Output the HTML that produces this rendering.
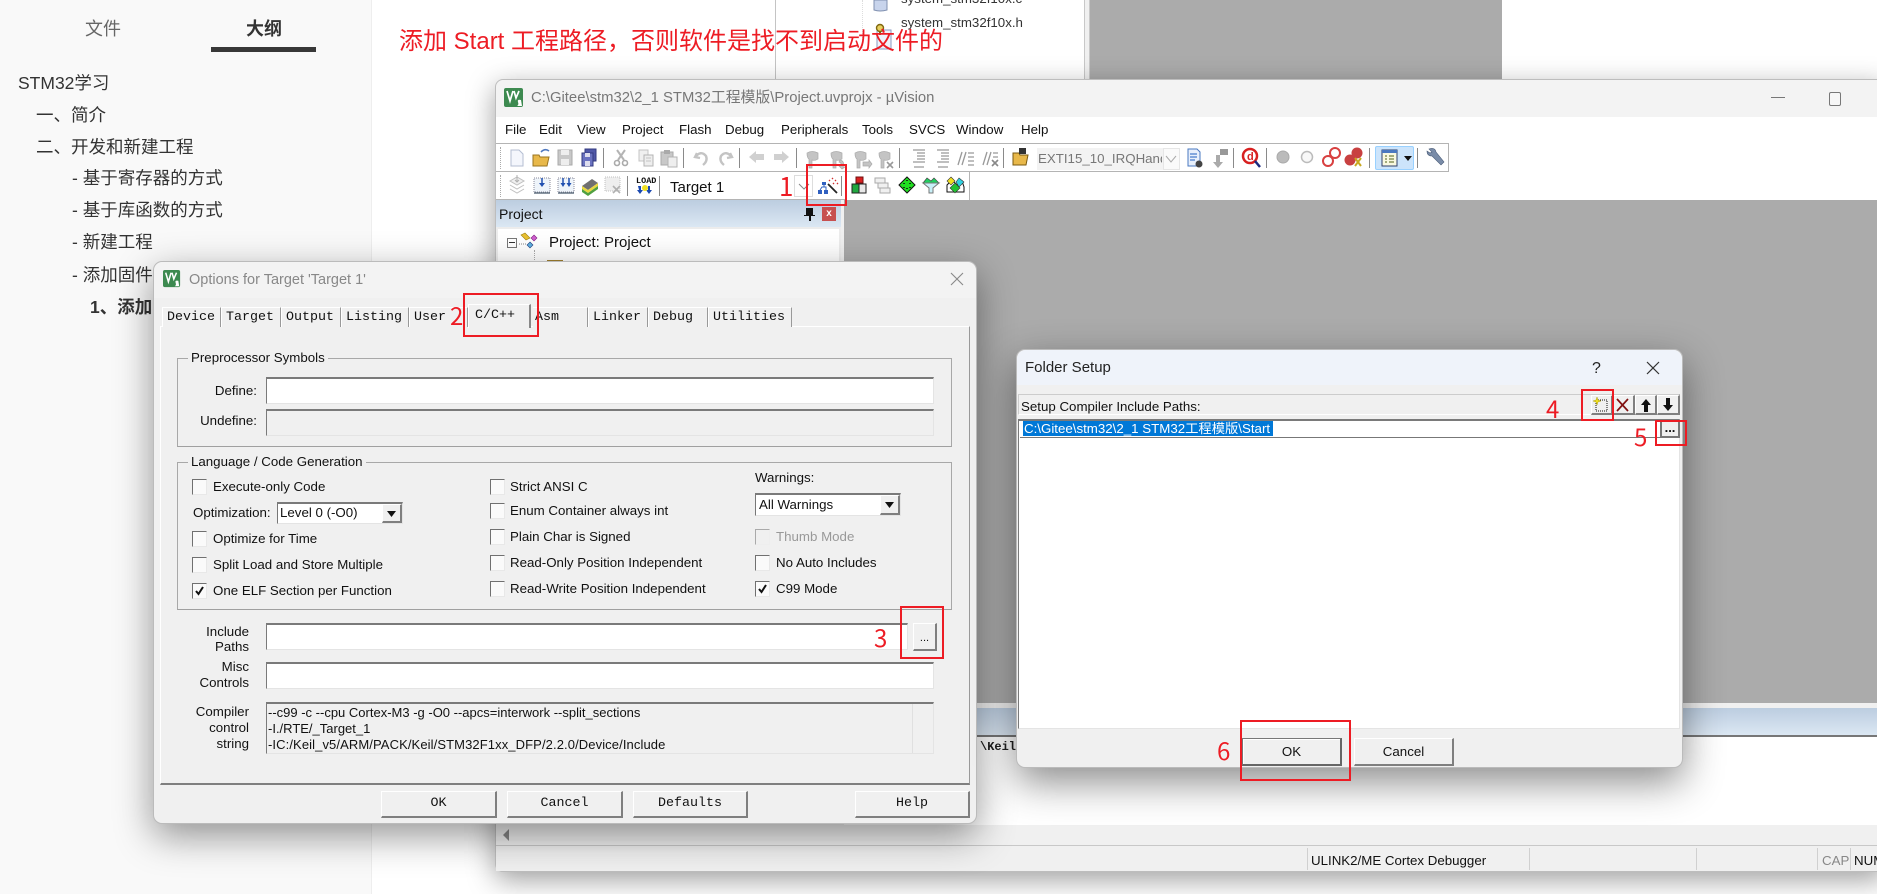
<!DOCTYPE html>
<html lang="zh"><head><meta charset="utf-8"><title>Keil</title>
<style>
html,body{margin:0;padding:0;width:1877px;height:894px;overflow:hidden;background:#fff}
body{position:relative;font-family:"Liberation Sans","Noto Sans CJK SC",sans-serif;color:#111}
div,span,svg{position:absolute;box-sizing:border-box}
.t{white-space:nowrap;line-height:20px;height:20px;font-size:13.3px}
.o{font-size:17.5px;color:#333;line-height:24px;height:24px;white-space:nowrap}
.m{font-size:13.3px;color:#111;top:120px;white-space:nowrap;line-height:20px}
.r{position:absolute;border:2px solid #ed1c24;z-index:50}
.n{color:#ed1c24;font-size:24px;line-height:30px;height:30px;z-index:50;font-family:"Noto Sans CJK SC","Liberation Sans",sans-serif}
.tab{top:307px;height:20px;background:#f0f0f0;border-top:1px solid #fff;border-left:1px solid #fff;border-right:1px solid #999;font:13.33px/19px "Liberation Mono",monospace;padding-left:4px;white-space:nowrap;color:#111}
.in{background:#fff;border-top:2px solid #7a7a7a;border-left:1px solid #7a7a7a;border-right:1px solid #e4e4e4;border-bottom:1px solid #e4e4e4}
.g{border:1px solid #a8a8a8;border-bottom:1px solid #a0a0a0}
.gl{background:#f0f0f0;padding:0 3px;font-size:13.3px;line-height:18px;height:18px;white-space:nowrap;color:#111}
.c{width:15px;height:16px;background:#fafafa;border-top:1px solid #707070;border-left:1px solid #707070;border-right:1px solid #e8e8e8;border-bottom:1px solid #e8e8e8}
.b{background:#f0f0f0;border-top:1px solid #fff;border-left:1px solid #fff;border-right:2px solid #7f7f7f;border-bottom:2px solid #7f7f7f;text-align:center;font:13.33px/24px "Liberation Mono",monospace;color:#111}
.b2{background:#f0f0f0;border-top:1px solid #fff;border-left:1px solid #fff;border-right:2px solid #7f7f7f;border-bottom:2px solid #7f7f7f;text-align:center;font-size:13.3px;line-height:25px;color:#111}
.sep{width:1px;background:#8a8a8a}
</style></head><body>

<!-- sidebar -->
<div style="left:0;top:0;width:372px;height:894px;background:#f9f9f9;border-right:1px solid #eee"></div>
<div class="t" style="left:85px;top:18px;width:36px;font-size:18px;line-height:22px;height:22px;color:#666">文件</div>
<div class="t" style="left:246px;top:18px;width:36px;font-size:18px;line-height:22px;height:22px;color:#333;font-weight:700">大纲</div>
<div style="left:211px;top:47px;width:105px;height:5px;background:#383838"></div>
<div class="o" style="left:18px;top:71px">STM32学习</div>
<div class="o" style="left:36px;top:103px">一、简介</div>
<div class="o" style="left:36px;top:135px">二、开发和新建工程</div>
<div class="o" style="left:72px;top:166px">- 基于寄存器的方式</div>
<div class="o" style="left:72px;top:198px">- 基于库函数的方式</div>
<div class="o" style="left:72px;top:230px">- 新建工程</div>
<div class="o" style="left:72px;top:263px">- 添加固件库</div>
<div class="o" style="left:90px;top:295px;font-weight:700">1、添加固件</div>

<!-- top doc -->
<div style="left:775px;top:0;width:1px;height:80px;background:#c4c4c4"></div>
<div style="left:1084px;top:0;width:6px;height:80px;background:#f0f0f0;border-left:1px solid #c8c8c8;border-right:1px solid #c8c8c8"></div>
<div style="left:1090px;top:0;width:412px;height:80px;background:#ababab"></div>
<div style="left:862px;top:0;width:1px;height:50px;border-left:1px dotted #ddd"></div>
<div style="left:862px;top:50px;width:14px;height:1px;border-top:1px dotted #ddd"></div>
<svg style="left:872px;top:0" width="26" height="52" viewBox="0 0 26 52">
<path d="M2 0h13v10q-7 2-13 0z" fill="#c8d4ec" stroke="#8090b0"/>
<path d="M5 30h14v19h-14z" fill="#eef2fb" stroke="#8a9ac0"/><circle cx="8" cy="28" r="3.500" fill="#e8d060" stroke="#806810" stroke-width="1.400"/><rect x="7" y="31" width="2" height="4" fill="#806810"/>
</svg>
<div class="t" style="left:901px;top:-11px;font-size:13.3px;color:#333">system_stm32f10x.c</div>
<div class="t" style="left:901px;top:13px;font-size:13.3px;color:#333">system_stm32f10x.h</div>
<div class="t" style="left:399px;top:25px;height:34px;line-height:34px;font-size:24px;color:#ed1c24">添加 Start 工程路径，否则软件是找不到启动文件的</div>

<!-- Keil window -->
<div style="left:495px;top:79px;width:1390px;height:793px;border-radius:8px 0 0 8px;background:#f0f0f0;border:1px solid #bdbdbd;box-shadow:0 8px 28px rgba(0,0,0,.38)"></div>
<div style="left:496px;top:80px;width:1381px;height:37px;background:#f3f3f3;border-radius:8px 0 0 0"></div>
<div class="t" style="left:531px;top:88px;font-size:14.85px;color:#777">C:\Gitee\stm32\2_1 STM32工程模版\Project.uvprojx - µVision</div>
<svg style="left:504px;top:88px" width="20" height="20" viewBox="0 0 20 20"><rect width="19" height="19" rx="2" fill="#3d8a50"/><path d="M3 3l3 10 3-10M10 3l2 7 3-7" stroke="#fff" stroke-width="1.700" fill="none"/><path d="M17 12q-4-1-3 2t-1 4h5z" fill="#fff"/></svg>
<div style="left:1771px;top:97px;width:14px;height:1px;background:#777"></div>
<div style="left:1829px;top:92px;width:12px;height:14px;border:1px solid #777;border-radius:2px;background:#f6f6f6"></div>
<div style="left:496px;top:117px;width:1381px;height:26px;background:#fff"></div>
<div class="m" style="left:505px">File</div><div class="m" style="left:539px">Edit</div><div class="m" style="left:577px">View</div><div class="m" style="left:622px">Project</div><div class="m" style="left:679px">Flash</div><div class="m" style="left:725px">Debug</div><div class="m" style="left:781px">Peripherals</div><div class="m" style="left:862px">Tools</div><div class="m" style="left:909px">SVCS</div><div class="m" style="left:956px">Window</div><div class="m" style="left:1021px">Help</div>
<!-- toolbars -->
<div style="left:496px;top:143px;width:1381px;height:57px;background:#fff"></div>
<div style="left:496px;top:143px;width:952px;height:1px;background:#b4b4b4"></div>
<div style="left:496px;top:171px;width:952px;height:1px;background:#b4b4b4"></div>
<div style="left:1448px;top:143px;width:1px;height:29px;background:#b4b4b4"></div>
<div style="left:969px;top:172px;width:1px;height:28px;background:#b4b4b4"></div>
<div style="left:500px;top:147px;width:1px;height:22px;border-left:1px dotted #aaa"></div>
<div style="left:500px;top:175px;width:1px;height:22px;border-left:1px dotted #aaa"></div>
<div class="sep" style="left:603px;top:148px;height:20px"></div><div class="sep" style="left:683px;top:148px;height:20px"></div><div class="sep" style="left:739px;top:148px;height:20px"></div><div class="sep" style="left:796px;top:148px;height:20px"></div><div class="sep" style="left:899px;top:148px;height:20px"></div><div class="sep" style="left:1003px;top:148px;height:20px"></div><div class="sep" style="left:1233px;top:148px;height:20px"></div><div class="sep" style="left:1266px;top:148px;height:20px"></div><div class="sep" style="left:1369px;top:148px;height:20px"></div><div class="sep" style="left:1417px;top:148px;height:20px"></div>
<div class="sep" style="left:627px;top:176px;height:20px"></div><div class="sep" style="left:659px;top:176px;height:20px"></div><div class="sep" style="left:841px;top:176px;height:20px"></div>
<div style="left:1037px;top:148px;width:143px;height:22px;background:#f3f3f3"></div>
<div style="left:1163px;top:148px;width:17px;height:22px;background:#fafafa;border:1px solid #e6e6e6"></div>
<div class="t" style="left:1038px;top:149px;width:124px;overflow:hidden;font-size:13.3px;color:#777">EXTI15_10_IRQHandler</div>
<svg style="left:1165px;top:154px" width="12" height="10"><path d="M1 2l5 6 5-6" fill="none" stroke="#aaa"/></svg>
<div style="left:1375px;top:146px;width:39px;height:24px;background:#cce4fb;border:1px solid #99d1ff;border-radius:2px"></div>
<div class="t" style="left:670px;top:178px;font-size:15px;color:#111">Target 1</div>
<div style="left:794px;top:175px;width:19px;height:22px;border:1px solid #ddd;background:#fff"></div>
<svg style="left:798px;top:182px" width="12" height="10"><path d="M1 2l5 5 5-5" fill="none" stroke="#888"/></svg>

<svg style="left:0;top:0" width="1877" height="894" viewBox="0 0 1877 894">
<!-- row 1 -->
<path d="M511 150h8l4 4v12h-12z" fill="#f4f6fc" stroke="#b4bed2"/>
<path d="M533 155h6l1 2h9l-2 9h-14z" fill="#e8b84a" stroke="#9a7420"/><path d="M541 152q4-4 8-1" fill="none" stroke="#4f78c0" stroke-width="1.600"/>
<g><rect x="558" y="150" width="14" height="15" fill="#c8c8c8" stroke="#aaa"/><rect x="561" y="150" width="8" height="5" fill="#eee"/><rect x="561" y="159" width="8" height="6" fill="#eee"/></g>
<g><rect x="585" y="149" width="11" height="12" fill="#5058a8" stroke="#333a80"/><rect x="582" y="153" width="11" height="13" fill="#6a72c0" stroke="#333a80"/><rect x="585" y="153" width="5" height="4" fill="#dde"/><rect x="585" y="161" width="5" height="5" fill="#dde"/></g>
<path d="M617 150l7 10M625 150l-7 10" stroke="#b4b4b4" stroke-width="2"/><circle cx="617" cy="163" r="2.500" fill="none" stroke="#aaa" stroke-width="1.600"/><circle cx="625" cy="163" r="2.500" fill="none" stroke="#aaa" stroke-width="1.600"/>
<path d="M639 150h9v11h-9z" fill="#f0f0f0" stroke="#c4c4c4"/><path d="M644 155h9v11h-9z" fill="#eee" stroke="#b4b4b4"/><path d="M646 158h5M646 161h5" stroke="#c4c4c4"/>
<path d="M661 152h12v13h-12z" fill="#c8c8c8" stroke="#aaa"/><rect x="664" y="150" width="6" height="4" fill="#aaa"/><path d="M668 157h9v10h-9z" fill="#eee" stroke="#b4b4b4"/>
<path d="M697 153l-2 4 5 1M695 157q6-7 11-1q2 5-3 9" fill="none" stroke="#c4c4c4" stroke-width="2.400"/>
<path d="M730 153l2 4-5 1M732 157q-6-7-11-1q-2 5 3 9" fill="none" stroke="#c4c4c4" stroke-width="2.400"/>
<path d="M749 157l7-6v3h8v6h-8v3z" fill="#d0d0d0"/>
<path d="M789 157l-7-6v3h-8v6h8v3z" fill="#d0d0d0"/>
<g fill="#c4c4c4" stroke="#aaa" stroke-width=".7">
<path d="M807 153q5-3 11 0v6q-3 2-6 1v8h-3v-9q-2-1-2-6z"/>
<path d="M831 153q5-3 11 0v6q-3 2-6 1v8h-3v-9q-2-1-2-6z"/><path d="M840 160q5 1 3 7l2 0-3 2-3-3h2q1-3-2-4z"/>
<path d="M855 153q5-3 11 0v6q-3 2-6 1v8h-3v-9q-2-1-2-6z"/><path d="M863 162h6v-2l3 4-3 4v-2h-6z"/>
<path d="M879 153q5-3 11 0v6q-3 2-6 1v8h-3v-9q-2-1-2-6z"/></g><path d="M887 162l6 6M893 162l-6 6" stroke="#999" stroke-width="1.600"/>
<g stroke="#999" stroke-width="1.300" fill="none"><path d="M913 150h12M917 153h8M917 156h8M917 159h8M913 162h12M914 167h10"/><path d="M937 150h12M941 153h8M941 156h8M941 159h8M937 162h12M938 167h10"/><path d="M958 165l4-13M962 165l4-13M968 153h6M968 157h6M968 161h6M968 165h6"/><path d="M983 165l4-13M987 165l4-13M993 153h5M993 157h5"/></g><path d="M992 160l6 6M998 160l-6 6" stroke="#888" stroke-width="1.600"/>
<path d="M1013 153h6l1 2h8l-2 10h-13z" fill="#e8b84a" stroke="#7a5a10"/><rect x="1019" y="148" width="7" height="6" fill="#333"/>
<path d="M1188 149h9l3 3v14h-12z" fill="#e8f0fc" stroke="#4a78c0"/><path d="M1190 154h7M1190 157h7M1190 160h5" stroke="#2060c0"/><circle cx="1199" cy="164" r="3.500" fill="#444"/>
<path d="M1216 155v7h-3l5 6 5-6h-3v-7z" fill="#aaa"/><rect x="1220" y="149" width="8" height="6" fill="#999"/>
<circle cx="1250" cy="156" r="7" fill="#fff" stroke="#d82020" stroke-width="2.500"/><path d="M1255 161l5 6" stroke="#1a2a80" stroke-width="2.500"/><text x="1247" y="160" font-size="11" font-weight="700" fill="#d82020" font-family="Liberation Sans">d</text>
<circle cx="1283" cy="157" r="6" fill="#bbb" stroke="#aaa"/>
<circle cx="1307" cy="157" r="5.500" fill="#f8f8f8" stroke="#bbb" stroke-width="1.500"/>
<circle cx="1335" cy="153" r="5" fill="#fff" stroke="#d84040" stroke-width="2"/><circle cx="1328" cy="161" r="5" fill="#fff" stroke="#d84040" stroke-width="2"/>
<circle cx="1357" cy="153" r="5.500" fill="#c84040"/><circle cx="1350" cy="160" r="5.500" fill="#c84040"/><path d="M1355 158l6 8M1361 158l-6 8" stroke="#c8a820" stroke-width="2"/>
<rect x="1382" y="150" width="15" height="16" fill="#f8f8e0" stroke="#30406a"/><rect x="1382" y="150" width="15" height="3" fill="#4a78c0"/><path d="M1385 156h2M1385 159h2M1385 162h2M1389 156h5M1389 159h5M1389 162h5" stroke="#506018"/>
<path d="M1404 156h8l-4 5z" fill="#111"/>
<path d="M1429 149q6-2 7 3l8 10-3 3-9-9q-5 0-5-5l3 2 2-1z" fill="#7a8ca8" stroke="#4a5c78" stroke-width=".6"/>
<!-- row 2 -->
<g fill="#f0f0f0" stroke="#c0c0c0"><path d="M510 181l7-4 7 4-7 4z"/><path d="M510 185l7 4 7-4M510 189l7 4 7-4" fill="none"/></g><path d="M517 175v7m-2-2l2 2 2-2" stroke="#b0b0b0" fill="none"/>
<g><rect x="534" y="178" width="16" height="14" fill="#eef4fa" stroke="#889" stroke-dasharray="1 1"/><path d="M542 178v6" stroke="#2050b0" stroke-width="1.500"/><path d="M539 183h6l-3 4z" fill="#2050b0"/><path d="M534 193h16" stroke="#567" stroke-width="1.400"/></g>
<g><rect x="558" y="178" width="16" height="14" fill="#eef4fa" stroke="#889" stroke-dasharray="1 1"/><path d="M563 178v6M569 178v6" stroke="#2050b0" stroke-width="1.500"/><path d="M560.500 183h5l-2.500 4zM566.500 183h5l-2.500 4z" fill="#2050b0"/><path d="M558 193h16" stroke="#567" stroke-width="1.400"/></g>
<path d="M582 186l10-7 6 4-10 7z" fill="#707070"/><path d="M582 186l6 4 10-7v3l-10 7-6-4z" fill="#e8d840"/><path d="M582 189l6 4 10-7v3l-10 7-6-4z" fill="#50a040"/>
<rect x="605" y="177" width="15" height="14" fill="#eee" stroke="#c0c0c0" stroke-dasharray="1 1"/><path d="M613 186l7 7M620 186l-7 7" stroke="#b0b0b0" stroke-width="1.600"/>
<text x="636" y="183" font-size="8.500" font-weight="700" font-family="Liberation Mono" fill="#111">LOAD</text><path d="M638 186l1 4h-2l3 4 3-4h-2v-4zM648 186v4h-2l3 4 3-4h-2v-4z" fill="#1a48b0"/><circle cx="645" cy="188" r="3" fill="#f0e020"/>
<!-- wand -->
<g fill="#3060c0"><rect x="822" y="182" width="4" height="3"/><rect x="818" y="190" width="4" height="4"/><rect x="824" y="190" width="4" height="4"/></g><path d="M824 185v2M820 190l2-3h4l0 3" stroke="#3060c0" fill="none"/><path d="M828 184l9 9" stroke="#222" stroke-width="1.800"/><path d="M829 180l1 1M832 178l1 1M835 180l1 1M833 183l1 1M837 183l1 1" stroke="#d03030" stroke-width="1.300"/>
<rect x="856" y="177" width="7" height="6" fill="#d82020" stroke="#701010"/><rect x="852" y="184" width="7" height="9" fill="#20a840" stroke="#222"/><rect x="859" y="184" width="7" height="9" fill="#e8e8e8" stroke="#222"/>
<g fill="#f0f0f0" stroke="#aaa"><rect x="875" y="178" width="10" height="5"/><rect x="878" y="183" width="10" height="5"/><rect x="880" y="188" width="10" height="5"/></g>
<path d="M907 177l8 8-8 8-8-8z" fill="#20e020" stroke="#111"/><path d="M904 183v1M910 183v1M907 180v1M907 188v1M904 187v1M910 187v1" stroke="#111" stroke-width="1.600"/>
<path d="M923 183l4-5 4 3 3-3 5 5z" fill="#20d060" stroke="#444" stroke-width=".7"/><path d="M923 183h16l-6 5v5h-4v-5z" fill="#c8f0f8" stroke="#777"/>
<path d="M947 192v-7l5-5 5 5 5-4 2 6v5z" fill="#fff" stroke="#111"/><path d="M951 177l4 4-4 4-4-4z" fill="#f0e020" stroke="#333" stroke-width=".6"/><path d="M959 178l5 4-5 5-3-5z" fill="#30d0e0" stroke="#333" stroke-width=".6"/><path d="M955 183l5 5-5 5-5-5z" fill="#20c030" stroke="#333" stroke-width=".6"/>
</svg>
<!-- project panel -->
<div style="left:496px;top:199px;width:349px;height:1px;background:#b4b4b4"></div>
<div style="left:496px;top:200px;width:345px;height:27px;background:linear-gradient(#bccde0,#dbe7f3)"></div>
<div class="t" style="left:499px;top:204px;font-size:14px;color:#111">Project</div>
<svg style="left:803px;top:207px" width="13" height="15"><path d="M3 1h7v7h2v1H8v5H6V9H1V8h2z" fill="#111"/></svg>
<div style="left:822px;top:207px;width:14px;height:14px;background:#c75050;color:#fff;font:700 10px/13px 'Liberation Sans';text-align:center">x</div>
<div style="left:844px;top:200px;width:1033px;height:504px;background:#ababab"></div>
<div style="left:841px;top:200px;width:3px;height:504px;background:#f0f0f0"></div>
<div style="left:496px;top:227px;width:345px;height:500px;background:#fff;border:2px solid #ececec"></div>
<div style="left:507px;top:238px;width:10px;height:10px;border:1px solid #777;background:#fff"></div><div style="left:509px;top:242px;width:6px;height:1px;background:#333"></div>
<svg style="left:517px;top:231px" width="30" height="20"><path d="M2 13h8" stroke="#888" stroke-dasharray="1 1"/><path d="M8 2l5 5-4 2-5-5z" fill="#e8c030" stroke="#a08010" stroke-width=".6"/><path d="M17 4l3 3-3 3-3-3z" fill="#d060d0" stroke="#802080" stroke-width=".6"/><path d="M13 11l3 3-3 3-3-3z" fill="#60b0e0" stroke="#204080" stroke-width=".6"/></svg>
<div class="t" style="left:549px;top:233px;font-size:15px;color:#111">Project: Project</div>
<div style="left:534px;top:250px;width:1px;height:14px;border-left:1px dotted #aaa"></div>
<div style="left:547px;top:260px;width:16px;height:6px;background:#e8c878;border:1px solid #a08030"></div>
<!-- bottom panel -->
<div style="left:844px;top:703px;width:1033px;height:5px;background:#f0f0f0"></div>
<div style="left:844px;top:708px;width:1033px;height:27px;background:linear-gradient(#bccde0,#dbe7f3)"></div>
<div style="left:844px;top:735px;width:1033px;height:2px;background:#777"></div>
<div style="left:844px;top:737px;width:1033px;height:88px;background:#fff"></div>
<div class="t" style="left:980px;top:737px;font:12px/20px 'Liberation Mono',monospace;color:#222;font-weight:700">\Keil</div>
<div style="left:496px;top:825px;width:1381px;height:20px;background:#f0f0f0"></div>
<svg style="left:501px;top:828px" width="10" height="14"><path d="M8 1L2 7l6 6z" fill="#888"/></svg>
<div style="left:496px;top:845px;width:1381px;height:1px;background:#c8c8c8"></div>
<div style="left:496px;top:846px;width:1381px;height:25px;background:#f0f0f0"></div>
<div style="left:1307px;top:848px;width:1px;height:22px;background:#d0d0d0"></div><div style="left:1529px;top:848px;width:1px;height:22px;background:#d0d0d0"></div><div style="left:1696px;top:848px;width:1px;height:22px;background:#d0d0d0"></div><div style="left:1817px;top:848px;width:1px;height:22px;background:#d0d0d0"></div><div style="left:1850px;top:848px;width:1px;height:22px;background:#d0d0d0"></div>
<div class="t" style="left:1311px;top:851px;font-size:13.3px">ULINK2/ME Cortex Debugger</div>
<div class="t" style="left:1822px;top:851px;font-size:13.3px;color:#888">CAP</div>
<div class="t" style="left:1854px;top:851px;font-size:13.3px">NUM</div>

<!-- Options dialog -->
<div style="left:153px;top:261px;width:824px;height:563px;background:#f0f0f0;border:1px solid #bbb;border-radius:9px;box-shadow:0 12px 38px rgba(0,0,0,.42)"></div>
<div style="left:154px;top:262px;width:822px;height:36px;background:#f3f3f3;border-radius:9px 9px 0 0"></div>
<svg style="left:163px;top:270px" width="18" height="18" viewBox="0 0 20 20"><rect width="19" height="19" rx="2" fill="#3d8a50"/><path d="M3 3l3 10 3-10M10 3l2 7 3-7" stroke="#fff" stroke-width="1.700" fill="none"/><path d="M17 12q-4-1-3 2t-1 4h5z" fill="#fff"/></svg>
<div class="t" style="left:189px;top:270px;font-size:14.5px;color:#888">Options for Target 'Target 1'</div>
<svg style="left:950px;top:272px" width="14" height="14"><path d="M1 1l12 12M13 1L1 13" stroke="#888" stroke-width="1.100"/></svg>
<div style="left:160px;top:326px;width:810px;height:459px;border:1px solid #fff;border-right:1px solid #999;border-bottom:2px solid #7f7f7f"></div>
<div class="tab" style="left:162px;width:59px">Device</div>
<div class="tab" style="left:221px;width:60px">Target</div>
<div class="tab" style="left:281px;width:60px">Output</div>
<div class="tab" style="left:341px;width:68px">Listing</div>
<div class="tab" style="left:409px;width:59px">User</div>
<div class="tab" style="left:468px;top:304px;width:63px;height:24px;padding-left:6px;border-right:2px solid #888;z-index:2;line-height:22px">C/C++</div>
<div class="tab" style="left:533px;width:55px;border-left:0;padding-left:2px">Asm</div>
<div class="tab" style="left:588px;width:60px">Linker</div>
<div class="tab" style="left:648px;width:60px">Debug</div>
<div class="tab" style="left:708px;width:84px">Utilities</div>

<div class="g" style="left:177px;top:358px;width:775px;height:89px"></div>
<div class="gl" style="left:188px;top:349px">Preprocessor Symbols</div>
<div class="t" style="right:1620px;top:381px">Define:</div>
<div class="in" style="left:266px;top:377px;width:668px;height:27px"></div>
<div class="t" style="right:1620px;top:411px">Undefine:</div>
<div class="in" style="left:266px;top:409px;width:668px;height:27px;background:#f0f0f0"></div>

<div class="g" style="left:177px;top:462px;width:775px;height:148px"></div>
<div class="gl" style="left:188px;top:453px">Language / Code Generation</div>
<div class="c" style="left:192px;top:479px"></div><div class="t" style="left:213px;top:477px">Execute-only Code</div>
<div class="t" style="left:193px;top:503px">Optimization:</div>
<div class="in" style="left:277px;top:502px;width:126px;height:22px;border-left:1px solid #777"></div>
<div class="t" style="left:280px;top:503px">Level 0 (-O0)</div>
<div class="b" style="left:382px;top:504px;width:20px;height:19px"></div>
<svg style="left:386px;top:510px" width="12" height="9"><path d="M1 1h9l-4.500 6z" fill="#111"/></svg>
<div class="c" style="left:192px;top:531px"></div><div class="t" style="left:213px;top:529px">Optimize for Time</div>
<div class="c" style="left:192px;top:557px"></div><div class="t" style="left:213px;top:555px">Split Load and Store Multiple</div>
<div class="c" style="left:192px;top:583px"></div><div class="t" style="left:213px;top:581px">One ELF Section per Function</div>
<svg style="left:194px;top:585px" width="12" height="12"><path d="M2 6l2.500 3L9 2" fill="none" stroke="#111" stroke-width="2"/></svg>

<div class="c" style="left:490px;top:479px"></div><div class="t" style="left:510px;top:477px">Strict ANSI C</div>
<div class="c" style="left:490px;top:503px"></div><div class="t" style="left:510px;top:501px">Enum Container always int</div>
<div class="c" style="left:490px;top:529px"></div><div class="t" style="left:510px;top:527px">Plain Char is Signed</div>
<div class="c" style="left:490px;top:555px"></div><div class="t" style="left:510px;top:553px">Read-Only Position Independent</div>
<div class="c" style="left:490px;top:581px"></div><div class="t" style="left:510px;top:579px">Read-Write Position Independent</div>

<div class="t" style="left:755px;top:468px">Warnings:</div>
<div class="in" style="left:755px;top:493px;width:146px;height:23px;border-left:1px solid #777"></div>
<div class="t" style="left:759px;top:495px">All Warnings</div>
<div class="b" style="left:880px;top:495px;width:20px;height:20px"></div>
<svg style="left:884px;top:501px" width="12" height="9"><path d="M1 1h9l-4.500 6z" fill="#111"/></svg>
<div class="c" style="left:755px;top:529px;background:#f0f0f0;border-color:#aaa #eee #eee #aaa"></div><div class="t" style="left:776px;top:527px;color:#999">Thumb Mode</div>
<div class="c" style="left:755px;top:555px"></div><div class="t" style="left:776px;top:553px">No Auto Includes</div>
<div class="c" style="left:755px;top:581px"></div><div class="t" style="left:776px;top:579px">C99 Mode</div>
<svg style="left:757px;top:583px" width="12" height="12"><path d="M2 6l2.500 3L9 2" fill="none" stroke="#111" stroke-width="2"/></svg>

<div class="t" style="right:1628px;top:622px">Include</div><div class="t" style="right:1628px;top:637px">Paths</div>
<div class="in" style="left:266px;top:623px;width:642px;height:27px"></div>
<div class="b2" style="left:913px;top:623px;width:24px;height:28px;line-height:28px;font-size:11px">...</div>
<div class="t" style="right:1628px;top:657px">Misc</div><div class="t" style="right:1628px;top:673px">Controls</div>
<div class="in" style="left:266px;top:662px;width:668px;height:27px"></div>
<div class="t" style="right:1628px;top:702px">Compiler</div><div class="t" style="right:1628px;top:718px">control</div><div class="t" style="right:1628px;top:734px">string</div>
<div class="in" style="left:266px;top:702px;width:668px;height:52px;background:#f0f0f0"></div>
<div style="left:912px;top:704px;width:1px;height:49px;background:#e0e0e0"></div>
<div class="t" style="left:268px;top:703px;font-size:13px">--c99 -c --cpu Cortex-M3 -g -O0 --apcs=interwork --split_sections</div>
<div class="t" style="left:268px;top:719px;font-size:13px">-I./RTE/_Target_1</div>
<div class="t" style="left:268px;top:735px;font-size:13px;letter-spacing:.1px">-IC:/Keil_v5/ARM/PACK/Keil/STM32F1xx_DFP/2.2.0/Device/Include</div>
<div class="b" style="left:381px;top:791px;width:116px;height:27px">OK</div>
<div class="b" style="left:507px;top:791px;width:116px;height:27px">Cancel</div>
<div class="b" style="left:633px;top:791px;width:115px;height:27px">Defaults</div>
<div class="b" style="left:855px;top:791px;width:115px;height:27px">Help</div>

<!-- Folder dialog -->
<div style="left:1016px;top:349px;width:667px;height:419px;background:#f0f0f0;border:1px solid #bbb;border-radius:9px;box-shadow:0 14px 40px rgba(0,0,0,.46)"></div>
<div style="left:1017px;top:350px;width:665px;height:35px;background:#eff3fa;border-radius:9px 9px 0 0"></div>
<div class="t" style="left:1025px;top:358px;font-size:15px;color:#222">Folder Setup</div>
<div class="t" style="left:1592px;top:359px;font-size:16px;color:#222">?</div>
<svg style="left:1646px;top:361px" width="14" height="14"><path d="M1 1l12 12M13 1L1 13" stroke="#333" stroke-width="1.200"/></svg>
<div style="left:1018px;top:394px;width:662px;height:21px;border:1px solid #ccc;border-bottom:1px solid #fff;border-right:1px solid #999"></div>
<div class="t" style="left:1021px;top:397px">Setup Compiler Include Paths:</div>
<div class="b2" style="left:1591px;top:395px;width:22px;height:20px"></div><div class="b2" style="left:1613px;top:395px;width:22px;height:20px"></div><div class="b2" style="left:1635px;top:395px;width:22px;height:20px"></div><div class="b2" style="left:1657px;top:395px;width:23px;height:20px"></div>
<svg style="left:1591px;top:395px" width="90" height="20">
<rect x="5" y="5" width="11" height="11" fill="none" stroke="#111" stroke-dasharray="1 1"/><path d="M6 2l1 3 3 1-3 1-1 3-1-3-3-1 3-1z" fill="#f0e020" stroke="#b0a010" stroke-width=".5"/>
<path d="M26 4l11 12M37 4L26 16" stroke="#801010" stroke-width="1.700"/>
<path d="M50 10l5-6 5 6h-3v7h-4v-7z" fill="#111"/>
<path d="M72 10l5 6 5-6h-3v-7h-4v7z" fill="#111"/>
</svg>
<div class="in" style="left:1018px;top:419px;width:662px;height:310px"></div>
<div style="left:1020px;top:437px;width:659px;height:1px;background:#777"></div>
<div style="left:1023px;top:421px;width:250px;height:15px;background:#0078d7"></div>
<div class="t" style="left:1024px;top:419px;color:#fff;font-size:13.3px">C:\Gitee\stm32\2_1 STM32工程模版\Start</div>
<div style="left:1660px;top:420px;width:20px;height:18px;background:#f0f0f0;border:2px solid #777;font:700 13px/12px 'Liberation Sans';text-align:center;color:#111">...</div>
<div class="b2" style="left:1242px;top:738px;width:100px;height:28px;border:1px solid #777;border-right:2px solid #666;border-bottom:2px solid #666;box-shadow:inset 1px 1px 0 #fff">OK</div>
<div class="b2" style="left:1354px;top:738px;width:100px;height:28px">Cancel</div>

<!-- annotations -->
<div class="r" style="left:806px;top:164px;width:41px;height:42px"></div>
<div class="n" style="left:779px;top:171px;font-size:26px">1</div>
<div class="r" style="left:463px;top:293px;width:76px;height:44px"></div>
<div class="n" style="left:450px;top:300px">2</div>
<div class="r" style="left:900px;top:606px;width:44px;height:53px"></div>
<div class="n" style="left:874px;top:622px">3</div>
<div class="r" style="left:1581px;top:389px;width:33px;height:32px"></div>
<div class="n" style="left:1546px;top:393px">4</div>
<div class="r" style="left:1655px;top:420px;width:32px;height:26px"></div>
<div class="n" style="left:1634px;top:421px">5</div>
<div class="r" style="left:1240px;top:720px;width:111px;height:61px"></div>
<div class="n" style="left:1217px;top:735px">6</div>
</body></html>
